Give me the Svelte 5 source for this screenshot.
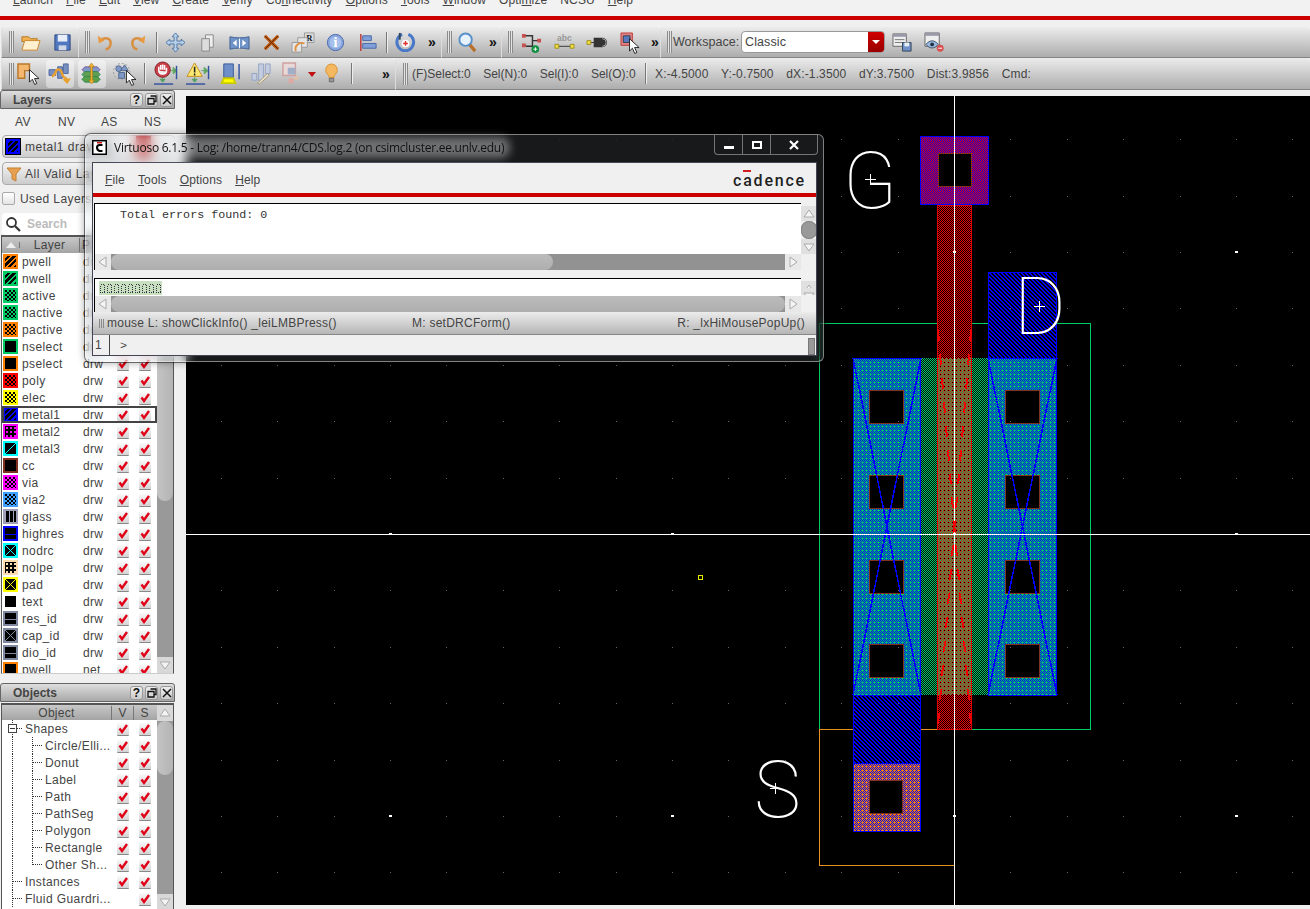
<script>
	const menus = [
		['L', 'aunch'], ['F', 'ile'], ['E', 'dit'], ['V', 'iew'], ['C', 'reate'], ['V', 'erify'],
		['Co', 'n', 'nectivity'], ['O', 'ptions'], ['T', 'ools'], ['W', 'indow'], ['Opti', 'm', 'ize'], ['', '', 'NCSU'], ['H', 'elp']
	];

	const layers = [
		{ n: 'pwell', p: 'drw', c: '#ff8000', t: 'hatch' },
		{ n: 'nwell', p: 'drw', c: '#00cc66', t: 'hatch' },
		{ n: 'active', p: 'drw', c: '#00cc66', t: 'check' },
		{ n: 'nactive', p: 'drw', c: '#00cc66', t: 'check' },
		{ n: 'pactive', p: 'drw', c: '#ff8000', t: 'check' },
		{ n: 'nselect', p: 'drw', c: '#00cc66', t: 'none' },
		{ n: 'pselect', p: 'drw', c: '#ff8000', t: 'none' },
		{ n: 'poly', p: 'drw', c: '#ff0000', t: 'check' },
		{ n: 'elec', p: 'drw', c: '#ffff00', t: 'check' },
		{ n: 'metal1', p: 'drw', c: '#0000ff', t: 'hatch', sel: true },
		{ n: 'metal2', p: 'drw', c: '#ff00ff', t: 'dots' },
		{ n: 'metal3', p: 'drw', c: '#00ffff', t: 'slash' },
		{ n: 'cc', p: 'drw', c: '#803020', t: 'none' },
		{ n: 'via', p: 'drw', c: '#ff00ff', t: 'check' },
		{ n: 'via2', p: 'drw', c: '#40a0ff', t: 'check' },
		{ n: 'glass', p: 'drw', c: '#a0a0b8', t: 'bars' },
		{ n: 'highres', p: 'drw', c: '#0000ff', t: 'wave' },
		{ n: 'nodrc', p: 'drw', c: '#00ffff', t: 'cross' },
		{ n: 'nolpe', p: 'drw', c: '#ffdcb0', t: 'dots' },
		{ n: 'pad', p: 'drw', c: '#ffff00', t: 'cross' },
		{ n: 'text', p: 'drw', c: '#ffffff', t: 'none' },
		{ n: 'res_id', p: 'drw', c: '#8088a0', t: 'wave' },
		{ n: 'cap_id', p: 'drw', c: '#8088a0', t: 'cross' },
		{ n: 'dio_id', p: 'drw', c: '#8088a0', t: 'wave' },
		{ n: 'pwell', p: 'net', c: '#ff8000', t: 'none' }
	];

	const objects = [
		{ n: 'Shapes', d: 0, open: true, v: true },
		{ n: 'Circle/Elli...', d: 1, v: true },
		{ n: 'Donut', d: 1, v: true },
		{ n: 'Label', d: 1, v: true },
		{ n: 'Path', d: 1, v: true },
		{ n: 'PathSeg', d: 1, v: true },
		{ n: 'Polygon', d: 1, v: true },
		{ n: 'Rectangle', d: 1, v: true },
		{ n: 'Other Sh...', d: 1, v: true, last: true },
		{ n: 'Instances', d: 0, v: true },
		{ n: 'Fluid Guardri...', d: 0, v: false }
	];

	const status = ['Sel(N):0', 'Sel(I):0', 'Sel(O):0'];
	const coords = ['X:-4.5000', 'Y:-0.7500', 'dX:-1.3500', 'dY:3.7500', 'Dist:3.9856', 'Cmd:'];

	// canvas grid dots, major ones every fifth step
	const dots = [];
	for (let k = -14; k <= 6; k++) {
		for (let j = -7; j <= 7; j++) {
			dots.push({
				x: Math.round(954 + k * 56.4),
				y: Math.round(534 + j * 56.4),
				major: k % 5 === 0 && j % 5 === 0
			});
		}
	}

	const holes = [
		[869, 390], [869, 475], [869, 560], [869, 644],
		[1005, 390], [1005, 475], [1005, 560], [1005, 644]
	];
</script>

{#snippet check()}
	<span class="cb">
		<svg viewBox="0 0 12 12" width="12" height="12"><path d="M2.5 5.5 5 9 10 2" fill="none" stroke="#e00018" stroke-width="2.4" /></svg>
	</span>
{/snippet}

{#snippet arrow(dir)}
	<span class="sb-btn">
		<svg viewBox="0 0 16 16" width="16" height="16">
			{#if dir === 'up'}<path d="M8 4 13 11H3z" fill="#f4f4f4" stroke="#aaa" />
			{:else if dir === 'down'}<path d="M8 12 13 5H3z" fill="#f4f4f4" stroke="#aaa" />
			{:else if dir === 'left'}<path d="M4 8 11 3V13z" fill="#f4f4f4" stroke="#aaa" />
			{:else}<path d="M12 8 5 3V13z" fill="#f4f4f4" stroke="#aaa" />{/if}
		</svg>
	</span>
{/snippet}

{#snippet cursor(x, y)}
	<path transform="translate({x} {y})" d="M0 0v13l3-3 2.5 5.5 2.2-1-2.4-5.2H10z" fill="#fff" stroke="#222" stroke-width="1" />
{/snippet}

{#snippet dockTitle(name)}
	<div class="dock-title">
		<span>{name}</span>
		<div class="dock-btns">
			<b>?</b>
			<b><svg viewBox="0 0 10 10" width="10" height="10"><path d="M3.5 1h5.500v5.500H7M1 3.500h6V9H1z" fill="none" stroke="#111" stroke-width="1.300" /></svg></b>
			<b><svg viewBox="0 0 10 10" width="10" height="10"><path d="M1 1l8 8M9 1l-8 8" stroke="#111" stroke-width="1.500" /></svg></b>
		</div>
	</div>
{/snippet}

<div class="app">
	<div class="menubar">
		<div class="menus">
			{#each menus as m}
				<span>{#if m.length === 2}<u>{m[0]}</u>{m[1]}{:else}{m[0]}<u>{m[1]}</u>{m[2]}{/if}</span>
			{/each}
		</div>
	</div>
	<div class="redline"></div>

	<div class="toolbar row1">
		<div class="sec s1">
			<i class="grip"></i>
			<span class="slot"><svg viewBox="0 0 22 22"><path d="M2 5h7l2 2h7v3H2z" fill="#f0b050" stroke="#b87820" /><path d="M2 19 5 9h16l-3 10z" fill="#fff0d0" stroke="#c88830" /></svg></span>
			<span class="slot"><svg viewBox="0 0 22 22"><path d="M3 3h16v16H3z" fill="#5078c0" stroke="#304880" /><path d="M6 3h10v7H6z" fill="#e8eef8" /><path d="M7 14h8v5H7z" fill="#d0d8e8" /></svg></span>
		</div>
		<div class="sec s2">
			<i class="grip"></i>
			<span class="slot"><svg viewBox="0 0 22 22"><path d="M5 9c6-5 13-2 11 5-1 3-3 4-5 4" fill="none" stroke="#d89040" stroke-width="2.600" /><path d="M3 4l1 8 6-3z" fill="#e89a40" /></svg></span>
			<span class="slot"><svg viewBox="0 0 22 22"><path d="M17 9c-6-5-13-2-11 5 1 3 3 4 5 4" fill="none" stroke="#d89040" stroke-width="2.600" /><path d="M19 4l-1 8-6-3z" fill="#e89a40" /></svg></span>
			<i class="sep"></i>
			<span class="slot"><svg viewBox="0 0 22 22"><path d="M11 1l3.500 4H12.500v4.500H17V7.500l4 3.500-4 3.500v-2h-4.500V17H14.500L11 21 7.500 17h2v-4.500H5v2L1 11l4-3.500v2h4.500V5h-2z" fill="#b8cfe8" stroke="#5078a8" /></svg></span>
			<span class="slot"><svg viewBox="0 0 22 22"><path d="M9 3h8v13H9z" fill="#eee" stroke="#888" /><path d="M5 7h8v13H5z" fill="#ddd" stroke="#888" /></svg></span>
			<span class="slot"><svg viewBox="0 0 22 22"><path d="M1 5c6 1.500 14 1.500 20 0v13c-6-1.500-14-1.500-20 0z" fill="#6f93c8" stroke="#3f6090" /><path d="M8 8 4 11.500 8 15zM14 8l4 3.500-4 3.500z" fill="#fff" /><path d="M11 7v10" stroke="#fff" /></svg></span>
			<span class="slot"><svg viewBox="0 0 22 22"><path d="M4 4l14 14M18 4 4 18" stroke="#c05a10" stroke-width="3.400" /><path d="M4 4l14 14M18 4 4 18" stroke="#5a2808" stroke-width="1" /></svg></span>
			<span class="slot wide"><svg viewBox="0 0 26 24"><path d="M14 2h10v10H14z" fill="#ddd" stroke="#999" /><text x="16" y="10" class="tiny-r">R</text><path d="M7 7h10v10H7z" fill="#e4e4e4" stroke="#999" /><path d="M1 12h10v10H1z" fill="#e4e4e4" stroke="#999" /><path d="M5 21c-2-6 4-10 9-8" fill="none" stroke="#e09040" stroke-width="2" /></svg></span>
			<span class="slot"><svg viewBox="0 0 22 22"><circle cx="11" cy="11" r="8.500" fill="#8aa8e0" stroke="#4a68a8" /><circle cx="11" cy="11" r="6" fill="#a8c0ec" /><text x="11" y="16" class="info">i</text></svg></span>
			<span class="slot"><svg viewBox="0 0 22 22"><path d="M4 2v18" stroke="#c04040" stroke-width="1.600" /><path d="M6 4h9v5H6zM6 12h14v5H6z" fill="#7fa0d8" stroke="#4a68a8" /></svg></span>
			<i class="sep"></i>
			<span class="slot"><svg viewBox="0 0 22 22"><path d="M14 2.500a8.800 8.800 0 1 1-6.500 0" fill="none" stroke="#4a78c8" stroke-width="3" /><path d="M5 1v7" stroke="#345" stroke-width="2" /><circle cx="11" cy="12" r="4" fill="#fff" /><path d="M11 9.500v5M8.500 12h5" stroke="#e03030" stroke-width="1.500" /></svg></span>
			<span class="more">»</span>
		</div>
		<div class="sec s3">
			<i class="grip"></i>
			<span class="slot"><svg viewBox="0 0 22 22"><path d="M13 13l6 7" stroke="#b87028" stroke-width="3.400" /><circle cx="9" cy="8" r="6.500" fill="#e8f2fc" stroke="#5890c8" stroke-width="2" /></svg></span>
			<span class="more">»</span>
		</div>
		<div class="sec s4">
			<i class="grip"></i>
			<span class="slot"><svg viewBox="0 0 22 22"><path d="M5 4h7v11H5M12 9h7M2 4h3M2 14h3" fill="none" stroke="#333" stroke-width="1.500" /><path d="M1 2h4v4H1zM1 12h4v4H1zM17 7h4v4h-4z" fill="#c85050" /><circle cx="15" cy="18" r="4" fill="#109040" /><path d="M15 16v4M13 18h4" stroke="#fff" /></svg></span>
			<span class="slot"><svg viewBox="0 0 22 22"><text x="11" y="9" class="abc">abc</text><path d="M3 15h16" stroke="#333" /><path d="M1 13h4v4H1zM17 13h4v4h-4z" fill="#f0e040" stroke="#a09020" /></svg></span>
			<span class="slot"><svg viewBox="0 0 22 22"><path d="M2 11h6" stroke="#333" /><path d="M0 9h4v4H0z" fill="#f0e040" stroke="#a09020" /><path d="M7 6h9a5 5 0 0 1 0 10H7z" fill="#333" /><path d="M16 7a4 4 0 0 1 0 8" fill="none" stroke="#aaa" /></svg></span>
			<span class="slot"><svg viewBox="0 0 22 22"><path d="M1 1h12v13H1z" fill="#e08080" stroke="#c04040" /><path d="M3.500 4h7v7h-7z" fill="#5878c0" stroke="#345" />{@render cursor(10, 7)}</svg></span>
			<span class="more">»</span>
		</div>
		<div class="sec s5">
			<i class="grip"></i>
			<span class="ws-label">Workspace:</span>
			<div class="ws-combo">
				<span>Classic</span>
				<em><svg viewBox="0 0 10 6" width="10" height="6"><path d="M1 1h8L5 5z" fill="#fff" /></svg></em>
			</div>
			<span class="slot"><svg viewBox="0 0 22 22"><path d="M1 2h14v13H1z" fill="#eee" stroke="#666" /><path d="M1 2h14v3H1z" fill="#99a" /><path d="M3 8h10M3 11h8" stroke="#777" /><path d="M11 11h9v9h-9z" fill="#6f90c8" stroke="#345" /><path d="M13 11h5v4h-5z" fill="#e8eef8" /></svg></span>
			<span class="slot"><svg viewBox="0 0 22 22"><path d="M1 1h15v14H1z" fill="#eee" stroke="#666" /><path d="M1 1h15v3H1z" fill="#99a" /><path d="M2 13c4-5 9-5 13 0-4 5-9 5-13 0z" fill="#9ab8e0" stroke="#456" /><circle cx="8.500" cy="13" r="2" fill="#234" /><circle cx="17" cy="17" r="3.600" fill="#d85050" /><path d="M15 17h4" stroke="#fff" /></svg></span>
		</div>
	</div>

	<div class="toolbar row2">
		<div class="sec r1">
			<i class="grip"></i>
			<span class="slot big"><svg viewBox="0 0 24 24"><path d="M1 2h12v7H8v8H1z" fill="#f4b870" stroke="#b87828" stroke-width="1.500" />{@render cursor(13, 8)}</svg></span>
			<span class="slot big on"><svg viewBox="0 0 24 24"><path d="M0 8h7v6H0zM9 5h5v12H9zM15 2h5v10h-5z" fill="#7890c0" stroke="#5068a0" /><path d="M3 15c5-1 3-9 8-7 4 2 2 7 5 8 2 .5 3 3 3 5" fill="none" stroke="#e8a030" stroke-width="2.500" /><path d="M14 18l5 5 4-6z" fill="#e8a030" /></svg></span>
			<span class="slot big on"><svg viewBox="0 0 24 24"><path d="M4 5h13l3 3-3 3H4l-3-3z" fill="#8098c8" stroke="#506" stroke-width=".5" /><path d="M4 10h13l3 3-3 3H4l-3-3z" fill="#60a050" stroke="#385" /><path d="M4 15h13l3 3-3 3H4l-3-3z" fill="#58a048" stroke="#385" /><path d="M11 1l-3 4h2v14H8l3 4 3-4h-2V5h2z" fill="#f0b030" stroke="#a07010" stroke-width=".5" /></svg></span>
			<span class="slot big"><svg viewBox="0 0 24 24"><circle cx="9" cy="10" r="8.500" fill="none" stroke="#999" stroke-dasharray="2 2" /><circle cx="6" cy="7" r="3" fill="#8098c8" stroke="#506890" /><path d="M6 11h6v6H6z" fill="#8098c8" stroke="#506890" /><path d="M12 3l4 6H8z" fill="#8098c8" stroke="#506890" />{@render cursor(14, 9)}</svg></span>
			<i class="sep"></i>
			<span class="slot big"><svg viewBox="0 0 24 24"><path d="M0 23h20" stroke="#3050a0" stroke-width="1.500" /><path d="M9 16v4M6.500 18 9 21l2.500-3z" fill="#50a060" stroke="#50a060" /><path d="M17 9h4M20 5.500 24 9l-4 3.500z" fill="#60a860" stroke="#60a860" /><path d="M23.500 4v14" stroke="#3050a0" stroke-width="1.500" /><circle cx="9" cy="8" r="8" fill="#c84048" stroke="#802028" /><path d="M5 9V5M7 8V3M9 8V2.500M11 8V3M13 10V6M5 9c0 4 7 5 8 1" fill="#eee" stroke="#fff" stroke-width="1.600" /></svg></span>
			<span class="slot big"><svg viewBox="0 0 24 24"><path d="M0 23h20" stroke="#3050a0" stroke-width="1.500" /><path d="M9 16v4M6.500 18 9 21l2.500-3z" fill="#50a060" stroke="#50a060" /><path d="M16 9h4M19 5.500 23 9l-4 3.500z" fill="#60a860" stroke="#60a860" /><path d="M23.500 4v14" stroke="#3050a0" stroke-width="1.500" /><path d="M9 1 17 15H1z" fill="#fce870" stroke="#c89020" /><path d="M9 5v6M9 12v2" stroke="#222" stroke-width="1.600" /></svg></span>
			<span class="slot big"><svg viewBox="0 0 24 24"><path d="M6 2h10v14H6z" fill="#6f8fc8" stroke="#3a5a98" /><path d="M4 22l2-5h10l2 5z" fill="#ff0" stroke="#cc0" stroke-width="2" /><path d="M22 2v16" stroke="#3050a0" stroke-width="1.500" /></svg></span>
			<span class="slot big"><svg viewBox="0 0 24 24"><path d="M2 12h5v7H2zM9 2h5v17H9zM16 2h5v10h-5z" fill="#c4cde0" stroke="#93a4c4" /><path d="M8 22l10-10 2 2-10 9z" fill="#e8e0c8" stroke="#a09880" /></svg></span>
			<span class="slot big tri-slot">
				<svg viewBox="0 0 24 24"><path d="M1 1h13v13H1z" fill="#e8d8d8" stroke="#d0a0a0" stroke-width="1.500" /><path d="M6 6h8v7H6z" fill="#a0aec8" /><path d="M15 14l3 4h-6z" fill="#e8c0a0" /><path d="M7 17h5v5H7z" fill="#e0a8a0" /></svg>
			</span>
			<span class="tri"></span>
			<span class="slot bulb"><svg viewBox="0 0 24 24"><path d="M12 1a7 7 0 0 0-4 12.500c1 1 1 2 1 3h6c0-1 0-2 1-3A7 7 0 0 0 12 1z" fill="#f4b860" stroke="#d89030" /><path d="M9.500 17.500h5v4h-5z" fill="#999" stroke="#666" /></svg></span>
			<i class="sep last"></i>
			<span class="more">»</span>
		</div>
		<div class="sec r2">
			<i class="grip"></i>
			<span class="st first">(F)Select:0</span>
			{#each status as s}<span class="st">{s}</span>{/each}
			<i class="sep"></i>
			{#each coords as s}<span class="st co">{s}</span>{/each}
		</div>
	</div>

	<div class="main">
		<aside class="side">
			{@render dockTitle('Layers')}
			<div class="tabs">
				<span>AV</span><span>NV</span><span>AS</span><span>NS</span>
			</div>
			<div class="pick">
				<span class="sw hatch cur"></span>
				<span>metal1 drawing</span>
				<em></em>
			</div>
			<div class="pick second">
				<svg viewBox="0 0 16 16" width="16" height="16"><path d="M1 2h14l-5 6v7l-4-2V8z" fill="#e8a050" stroke="#c08030" /></svg>
				<span>All Valid Layers</span>
			</div>
			<label class="used"><i></i>Used Layers</label>
			<div class="search">
				<svg viewBox="0 0 16 16" width="16" height="16"><circle cx="6.500" cy="6.500" r="4.500" fill="#fff" stroke="#333" stroke-width="1.800" /><path d="M10 10l5 5" stroke="#333" stroke-width="2.200" /></svg>
				<span>Search</span>
			</div>

			<div class="table layers">
				<div class="rows">
					<div class="head">
						<span class="h-sort"><svg viewBox="0 0 10 6" width="10" height="6"><path d="M5 0l5 6H0z" fill="#eee" /></svg></span>
						<span class="h-layer">Layer</span>
						<span class="h-p">P</span>
					</div>
					{#each layers as l}
						<div class="row" class:sel={l.sel}>
							<span class="sw {l.t}" style="--c:{l.c}"></span>
							<span class="name">{l.n}</span>
							<span class="purpose">{l.p}</span>
							{@render check()}
							{@render check()}
						</div>
					{/each}
				</div>
				<div class="vscroll">
					{@render arrow('up')}
					<div class="thumb layers-thumb"></div>
					<div class="spacer"></div>
					{@render arrow('down')}
				</div>
			</div>

			{@render dockTitle('Objects')}
			<div class="table objects">
				<div class="rows">
					<div class="head obj">
						<span class="h-obj">Object</span>
						<span class="h-vs">V</span>
						<span class="h-vs">S</span>
					</div>
					{#each objects as o}
						<div class="row tree" class:child={o.d === 1} class:lastchild={o.last}>
							{#if o.open}<span class="minus"></span>{/if}
							<span class="oname">{o.n}</span>
							{#if o.v}{@render check()}{:else}<span class="cb none"></span>{/if}
							{@render check()}
						</div>
					{/each}
				</div>
				<div class="vscroll">
					{@render arrow('up')}
					<div class="thumb objects-thumb"></div>
					<div class="spacer"></div>
					{@render arrow('down')}
				</div>
			</div>
		</aside>

		<div class="canvas">
			<svg viewBox="186 96 1124 809" width="1124" height="809" shape-rendering="crispEdges">
				<defs>
					<pattern id="m1" width="4" height="4" patternUnits="userSpaceOnUse">
						<rect width="4" height="4" fill="#000" />
						<path d="M0 0h2v1H0zM1 1h2v1H1zM2 2h2v1H2zM3 3h1v1H3zM0 3h1v1H0z" fill="#0000ff" />
					</pattern>
					<!-- one pixel stipples, phase follows page coordinates -->
					<pattern id="active" width="2" height="2" patternUnits="userSpaceOnUse">
						<rect width="2" height="2" fill="#00cc66" />
						<path d="M1 0h1v1H1zM0 1h1v1H0z" fill="#000" />
					</pattern>
					<pattern id="poly" width="2" height="2" patternUnits="userSpaceOnUse">
						<rect width="2" height="2" fill="#000" />
						<path d="M1 0h1v1H1zM0 1h1v1H0z" fill="#f00000" />
					</pattern>
					<pattern id="polyactive" width="4" height="4" patternUnits="userSpaceOnUse">
						<rect width="4" height="4" fill="#00cc66" />
						<path d="M1 0h1v1H1zM3 0h1v1H3zM0 1h1v1H0zM2 1h1v1H2zM1 2h1v1H1zM3 2h1v1H3zM0 3h1v1H0zM2 3h1v1H2z" fill="#f00000" />
						<path d="M0 2h1v1H0z" fill="#000" />
					</pattern>
					<pattern id="teal" width="4" height="4" patternUnits="userSpaceOnUse">
						<rect width="4" height="4" fill="#0000ff" />
						<path d="M1 0h1v1H1zM3 0h1v1H3zM0 1h1v1H0zM2 1h1v1H2zM1 2h1v1H1zM3 2h1v1H3zM0 3h1v1H0zM2 3h1v1H2zM2 2h1v1H2z" fill="#00cc66" />
					</pattern>
					<pattern id="gate" width="2" height="2" patternUnits="userSpaceOnUse">
						<rect width="2" height="2" fill="#0000e0" />
						<path d="M1 0h1v1H1zM0 1h1v1H0z" fill="#f00000" />
					</pattern>
					<pattern id="psrc" width="4" height="4" patternUnits="userSpaceOnUse">
						<rect width="4" height="4" fill="#0000ff" />
						<path d="M1 0h1v1H1zM3 0h1v1H3zM0 1h1v1H0zM2 1h1v1H2zM1 2h1v1H1zM3 2h1v1H3zM0 3h1v1H0zM2 3h1v1H2zM2 2h1v1H2z" fill="#ff8000" />
					</pattern>
				</defs>

				<rect x="819.5" y="323.5" width="271" height="406" fill="none" stroke="#00cc66" />
				<rect x="819.5" y="729.5" width="135" height="136" fill="none" stroke="#e89020" />

				<rect x="921" y="358" width="67" height="337" fill="url(#active)" />
				<rect x="937.5" y="205.5" width="34" height="524" fill="url(#poly)" stroke="#e00000" />
				<rect x="938" y="358" width="33" height="337" fill="url(#polyactive)" />

				<rect x="920.5" y="136.500" width="68" height="68" fill="url(#gate)" stroke="#0000ff" />
				<rect x="988.5" y="272.5" width="68" height="86" fill="url(#m1)" stroke="#0000ff" />
				<rect x="988.5" y="358.5" width="68" height="337" fill="url(#teal)" stroke="#0000ff" />
				<rect x="853.5" y="358.5" width="67" height="337" fill="url(#teal)" stroke="#0000ff" />
				<rect x="853.5" y="695.5" width="67" height="68" fill="url(#m1)" stroke="#0000ff" />
				<rect x="853.5" y="763.5" width="67" height="68" fill="url(#psrc)" stroke="#0000ff" />

				<rect x="938.5" y="153.500" width="33" height="33" fill="#000" stroke="#803020" />
				<rect x="869.5" y="780.5" width="33" height="33" fill="#000" stroke="#803020" />
				{#each holes as h}
					<rect x={h[0] + 0.5} y={h[1] + 0.5} width="34" height="33" fill="#000" stroke="#803020" />
				{/each}

				<g stroke="#0000ff" stroke-width="1.500" fill="none">
					<path d="M853 358 921 695M921 358 853 695M988 358l69 337M1057 358l-69 337" />
				</g>

				{#each dots as d}
					{#if d.major}
						<rect x={d.x - 1} y={d.y - 1} width="3" height="2" fill="#fff" />
					{:else}
						<rect x={d.x} y={d.y} width="1" height="1" fill="#666" />
					{/if}
				{/each}

				<path d="M954.500 96v809M186 534.500h1124" stroke="#fff" stroke-width="1" />

				<g stroke="#f00000" stroke-width="2" fill="none" stroke-dasharray="11 13">
					<path d="M938 330 971 725M971 330 938 725" />
				</g>

				<rect x="698.500" y="575.500" width="4" height="4" fill="none" stroke="#e8e800" />

				<g class="marks" stroke="#fff">
					<path d="M865 179.500h11M870.500 174v11M1034 306.500h11M1039.500 301v11M770 788.500h11M775.500 783v11" />
				</g>
				<text x="843" y="208" class="lbl" shape-rendering="auto">G</text>
				<text x="1014" y="334" class="lbl" shape-rendering="auto">D</text>
				<text x="754" y="817" class="lbl" shape-rendering="auto">S</text>
			</svg>
		</div>
	</div>

	<div class="win">
		<div class="win-title">
			<svg viewBox="0 0 15 15" width="15" height="15"><path d="M0 0h15v15H0z" fill="#000" /><path d="M1.500 1.500h12v12h-12z" fill="#fff" /><path d="M5 2h5v1.500H5z" fill="#d01818" /><path d="M10.500 5h-3Q5 5 5 7.500T7.500 11h3" fill="none" stroke="#000" stroke-width="2" /></svg>
			<span>Virtuoso 6.1.5 - Log: /home/trann4/CDS.log.2 (on csimcluster.ee.unlv.edu)</span>
			<div class="win-btns">
				<b class="min"><i></i></b>
				<b class="max"><i></i></b>
				<b class="close"><svg viewBox="0 0 10 10" width="10" height="10"><path d="M1 1l8 8M9 1 1 9" stroke="#fff" stroke-width="2.200" /></svg></b>
			</div>
		</div>
		<div class="client">
			<div class="win-menu">
				<span><u>F</u>ile</span><span><u>T</u>ools</span><span><u>O</u>ptions</span><span><u>H</u>elp</span>
				<div class="logo"><span class="a">a</span></div>
			</div>
			<div class="win-red"></div>
			<div class="log">
				<div class="log-main">
					<div class="log-text">Total errors found: 0</div>
					<div class="hscroll">
						{@render arrow('left')}
						<div class="hthumb top"></div>
						<div class="spacer"></div>
						{@render arrow('right')}
					</div>
				</div>
				<div class="log-v">
					{@render arrow('up')}
					<div class="vthumb"></div>
					{@render arrow('down')}
				</div>
			</div>
			<div class="cmdlog">
				<div class="log-main">
					<div class="cmd-text">
						<svg class="tofu" viewBox="0 0 63 14" width="63" height="14" shape-rendering="crispEdges">
							<rect width="63" height="14" fill="#c8e0c0" />
							{#each [0, 1, 2, 3, 4, 5, 6, 7, 8] as i}
								<rect x={i * 7 + 1.5} y="3.500" width="4" height="8" fill="none" stroke="#334" stroke-dasharray="1 1" />
							{/each}
						</svg>
					</div>
					<div class="hscroll low">
						{@render arrow('left')}
						<div class="hthumb full"></div>
						{@render arrow('right')}
					</div>
				</div>
				<div class="log-v mini">
					{@render arrow('up')}
					{@render arrow('down')}
				</div>
			</div>
			<div class="mousebar">
				<i class="minigrip"></i>
				<span class="m1">mouse L: showClickInfo() _leiLMBPress()</span>
				<span class="m2">M: setDRCForm()</span>
				<span class="m3">R: _lxHiMousePopUp()</span>
			</div>
			<div class="prompt">
				<span class="num">1</span>
				<span class="gt">&gt;</span>
				<i class="stub"></i>
			</div>
		</div>
	</div>
</div>

<style>
	:global(body) {
		margin: 0;
		background: #f0f0f0;
		overflow: hidden;
	}

	.app {
		position: relative;
		width: 1310px;
		height: 909px;
		overflow: hidden;
		font-family: 'Liberation Sans', Arial, sans-serif;
		font-size: 12px;
		color: #444;
		background: #f0f0f0;
	}

	.menubar {
		height: 16px;
		overflow: hidden;
		background: #f2f2f2;
	}

	.menus {
		display: flex;
		gap: 13px;
		margin-top: -7px;
		padding-left: 13px;
		line-height: 14px;
		letter-spacing: 0.12px;
		white-space: nowrap;
	}

	.redline {
		height: 4px;
		background: #cc0000;
		margin-bottom: 7px;
	}

	.toolbar {
		display: flex;
		overflow: hidden;
	}

	.row1 {
		height: 31px;
	}

	.row2 {
		height: 32px;
	}

	.sec {
		display: flex;
		align-items: center;
		box-sizing: border-box;
		height: 100%;
		flex: none;
		background: linear-gradient(#ececec, #adadad);
		border-bottom: 1px solid #858585;
		border-radius: 4px 4px 0 0;
		border-left: 1px solid #ddd;
	}

	.s1 { width: 77px; padding-left: 7px; margin-left: 1px; gap: 2px; }
	.s1 .grip { margin-right: -1px; }
	.s2 { width: 363px; padding-left: 6px; }
	.s3 { width: 60px; padding-left: 5px; }
	.s4 { width: 159px; padding-left: 6px; gap: 3px; }
	.s5 { flex: 1; padding-left: 6px; }
	.s2 .slot { margin-right: 2px; }
	.s2 .sep { margin: 0 3px 0 2px; }

	.r1 { width: 394px; padding-left: 7px; margin-left: 1px; }
	.r2 { flex: 1; padding-left: 7px; }

	.grip {
		flex: none;
		width: 5px;
		height: 22px;
		background: repeating-linear-gradient(90deg, #8a8a8a 0 1px, #e4e4e4 1px 2px);
	}

	.sep {
		flex: none;
		width: 1px;
		height: 21px;
		background: #777;
		box-shadow: 1px 0 #eee;
	}

	.slot {
		flex: none;
		display: flex;
		align-items: center;
		justify-content: center;
		width: 30px;
		height: 24px;
	}

	.slot svg {
		width: 21px;
		height: 21px;
		overflow: visible;
	}

	.slot.wide svg {
		width: 25px;
		height: 23px;
	}

	.slot.big {
		width: 28px;
		height: 28px;
		margin-right: 4px;
		border-radius: 4px;
	}

	.slot.big svg {
		width: 23px;
		height: 23px;
	}

	.slot.on {
		background: rgba(255, 255, 255, 0.42);
	}

	.tiny-r {
		font: bold 9px 'Liberation Serif', serif;
		fill: #111;
	}

	.info {
		font: bold 15px 'Liberation Serif', serif;
		fill: #fff;
		text-anchor: middle;
	}

	.abc {
		font: bold 9px 'Liberation Sans', sans-serif;
		fill: #999;
		text-anchor: middle;
	}

	.more {
		flex: none;
		width: 14px;
		margin-left: 4px;
		text-align: center;
		font: bold 14px 'Liberation Sans', sans-serif;
		color: #111;
	}

	.s2 .more { margin-left: 3px; }
	.s4 .more { margin-left: 0; }

	.ws-label {
		margin-left: 1px;
		width: 68px;
		font-size: 12.5px;
		letter-spacing: 0.05px;
	}

	.ws-combo {
		display: flex;
		box-sizing: border-box;
		width: 144px;
		height: 22px;
		margin-right: 1px;
		border: 1px solid #999;
		border-radius: 4px;
		background: #fff;
		overflow: hidden;
	}

	.ws-combo span {
		flex: 1;
		padding-left: 3px;
		line-height: 20px;
		font-size: 12.5px;
		letter-spacing: 0.1px;
	}

	.ws-combo em {
		display: flex;
		align-items: center;
		justify-content: center;
		width: 16px;
		background: linear-gradient(#d00000, #980000);
	}

	.s5 .slot {
		width: 32px;
	}

	.tri-slot {
		margin-right: 0 !important;
	}

	.tri {
		flex: none;
		width: 0;
		height: 0;
		margin: 2px 4px 0 1px;
		border: 4px solid transparent;
		border-top: 5px solid #c01010;
		border-bottom: 0;
	}

	.bulb {
		width: 22px;
	}

	.sep.last {
		margin: 0 27px 0 9px;
	}

	.r1 .sep:not(.last) {
		margin: 0 6px 0 2px;
	}

	.r1 .more {
		margin-left: 0;
	}

	.st {
		margin-left: 12.5px;
		white-space: nowrap;
	}

	.st.co {
		letter-spacing: 0.15px;
	}

	.st.first {
		margin-left: 4px;
	}

	.r2 .sep {
		margin: 0 -3px 0 9px;
	}

	.main {
		display: flex;
		margin-top: 6px;
		height: 813px;
	}

	.side {
		flex: none;
		width: 175px;
		margin-right: 11px;
		margin-top: -6px;
		height: 819px;
	}

	.canvas {
		flex: none;
		width: 1124px;
		height: 809px;
		background: #000;
		overflow: hidden;
	}

	.canvas svg {
		display: block;
	}

	.lbl {
		font: 100 79px Roboto, sans-serif;
		fill: #fff;
	}

	.dock-title {
		display: flex;
		align-items: center;
		justify-content: space-between;
		box-sizing: border-box;
		height: 19px;
		padding: 0 1px 0 12px;
		background: linear-gradient(#dedede, #a8a8a8);
		border: 1px solid #666;
		border-radius: 3px 3px 0 0;
		font-size: 12px;
		font-weight: bold;
		color: #444;
	}

	.dock-btns {
		display: flex;
		gap: 2px;
	}

	.dock-btns b {
		display: flex;
		align-items: center;
		justify-content: center;
		box-sizing: border-box;
		width: 13px;
		height: 14px;
		border: 1px solid #999;
		border-radius: 3px;
		background: linear-gradient(#eee, #ccc);
		font-size: 12px;
		color: #111;
	}

	.tabs {
		display: grid;
		grid-template-columns: repeat(4, 43px);
		height: 26px;
		padding-left: 15px;
		align-items: center;
		letter-spacing: 0.3px;
	}

	.pick {
		display: flex;
		align-items: center;
		gap: 5px;
		position: relative;
		box-sizing: border-box;
		height: 23px;
		margin: 0 0 4px 2px;
		padding-left: 3px;
		border: 1px solid #aaa;
		border-radius: 4px;
		background: linear-gradient(#f4f4f4, #ccc);
		letter-spacing: 0.5px;
		white-space: nowrap;
	}

	.pick em {
		position: absolute;
		right: 23px;
		top: 0;
		bottom: 0;
		width: 15px;
		background: #b00000;
	}

	.pick.second {
		margin-top: 0;
		gap: 3px;
	}

	.used {
		display: flex;
		align-items: center;
		gap: 5px;
		height: 19px;
		margin: 2px 0 5px 2px;
		letter-spacing: 0.4px;
		white-space: nowrap;
	}

	.used i {
		box-sizing: border-box;
		width: 13px;
		height: 13px;
		border: 1px solid #aaa;
		border-radius: 2px;
		background: linear-gradient(#fff, #e4e4e4);
	}

	.search {
		display: flex;
		align-items: center;
		gap: 6px;
		height: 22px;
		margin-left: 2px;
		padding-left: 3px;
		background: #fff;
		border-radius: 4px 0 0 4px;
		color: #bbb;
		font-weight: bold;
	}

	.table {
		display: flex;
		overflow: hidden;
		background: #fff;
		border: 1px solid #555;
		border-width: 2px 1px 0 1px;
	}

	.table.layers {
		height: 436px;
		margin: 0 1px 9px 1px;
		border-bottom: 1px solid #ccc;
	}

	.table.objects {
		height: 205px;
		margin: 1px 1px 0 1px;
	}

	.rows {
		flex: none;
		width: 155px;
		overflow: hidden;
	}

	.head {
		display: flex;
		align-items: center;
		height: 16px;
		background: linear-gradient(#c8c8c8, #a4a4a4);
		color: #444;
	}

	.head.obj {
		height: 15px;
	}

	.h-sort {
		display: flex;
		justify-content: center;
		width: 17px;
		border-right: 1px solid #777;
	}

	.h-layer {
		width: 59px;
		text-align: center;
		border-right: 1px solid #777;
		letter-spacing: 0.3px;
	}

	.h-p {
		padding-left: 2px;
	}

	.h-obj {
		width: 109px;
		text-align: center;
		border-right: 1px solid #777;
		letter-spacing: 0.3px;
	}

	.h-vs {
		width: 21px;
		text-align: center;
		border-right: 1px solid #777;
	}

	.h-vs:last-child {
		border-right: 0;
	}

	.row {
		display: flex;
		align-items: center;
		box-sizing: border-box;
		height: 17px;
		position: relative;
	}

	.row.sel {
		outline: 2px solid #444;
		outline-offset: -2px;
	}

	.sw {
		flex: none;
		box-sizing: border-box;
		width: 15px;
		height: 15px;
		margin-left: 1px;
		border: 2px solid var(--c);
		background-color: #000;
		background-clip: padding-box;
	}

	.sw.cur {
		--c: #0000ff;
		width: 14px;
		height: 15px;
		margin-left: 0;
		outline: 1px solid #000;
	}

	.sw.hatch {
		background-image: repeating-linear-gradient(135deg, var(--c) 0 1.500px, #000 1.500px 4px);
	}

	.sw.check {
		background-image: repeating-conic-gradient(var(--c) 0 25%, #000 0 50%);
		background-size: 4px 4px;
	}

	.sw.dots {
		background-image: radial-gradient(var(--c) 0.8px, #000 1px);
		background-size: 4px 4px;
	}

	.sw.slash {
		background-image: linear-gradient(135deg, #000 47%, var(--c) 47% 53%, #000 53%);
	}

	.sw.bars {
		background-image: repeating-linear-gradient(90deg, var(--c) 0 1px, #000 1px 4px);
	}

	.sw.cross {
		background-image: linear-gradient(45deg, #000 46%, var(--c) 46% 54%, #000 54%), linear-gradient(135deg, #000 46%, var(--c) 46% 54%, #000 54%);
		background-blend-mode: lighten;
	}

	.sw.wave {
		background-image: linear-gradient(transparent 55%, var(--c) 55% 65%, transparent 65%);
	}

	.name {
		width: 61px;
		margin-left: 4px;
		letter-spacing: 0.4px;
	}

	.purpose {
		width: 34px;
		letter-spacing: 0.3px;
	}

	.cb {
		flex: none;
		display: block;
		box-sizing: border-box;
		width: 12px;
		height: 12px;
		margin-right: 10px;
		background: linear-gradient(#fafafa, #d4d4d4);
		border-radius: 1px;
		box-shadow: 0 1px 0 #888;
	}

	.cb svg {
		display: block;
	}

	.cb.none {
		background: none;
		box-shadow: none;
	}

	.row .cb:last-child {
		margin-right: 0;
	}

	.vscroll {
		flex: none;
		display: flex;
		flex-direction: column;
		width: 16px;
		background: #999;
	}

	.sb-btn {
		flex: none;
		display: block;
		width: 16px;
		height: 16px;
		background: #d8d8d8;
		border-bottom: 0;
	}

	.sb-btn svg {
		display: block;
	}

	.thumb {
		flex: none;
		background: linear-gradient(90deg, #c4c4c4, #b4b4b4);
		border-radius: 8px;
	}

	.layers-thumb {
		height: 248px;
	}

	.objects-thumb {
		height: 54px;
	}

	.spacer {
		flex: 1;
	}

	.tree {
		padding: 0 6px 0 23px;
	}

	.tree::before {
		content: '';
		position: absolute;
		left: 10px;
		top: 0;
		bottom: 0;
		border-left: 1px dotted #333;
	}

	.tree::after {
		content: '';
		position: absolute;
		left: 11px;
		top: 8px;
		width: 9px;
		border-top: 1px dotted #333;
	}

	.tree.child {
		padding-left: 43px;
	}

	.tree.child::after {
		left: 31px;
		width: 9px;
	}

	.tree.child .oname::before {
		content: '';
		position: absolute;
		left: 30px;
		top: 0;
		bottom: 0;
		border-left: 1px dotted #333;
	}

	.tree.lastchild .oname::before {
		bottom: 8px;
	}

	.minus {
		position: absolute;
		left: 6px;
		top: 4px;
		box-sizing: border-box;
		width: 9px;
		height: 9px;
		z-index: 1;
		background: linear-gradient(#333, #333) center/5px 1px no-repeat #fff;
		border: 1px solid #444;
	}

	.oname {
		flex: 1;
		min-width: 0;
		letter-spacing: 0.4px;
		white-space: nowrap;
	}

	/* floating log window, glass frame over whatever is behind it */
	.win {
		position: absolute;
		left: 85px;
		top: 134px;
		box-sizing: border-box;
		width: 739px;
		height: 228px;
		padding: 0 6px 5px 6px;
		display: flex;
		flex-direction: column;
		border: 1px solid rgba(255, 255, 255, 0.45);
		border-radius: 6px;
		background: rgba(190, 205, 225, 0.12);
		backdrop-filter: blur(6px);
		box-shadow: 0 0 0 1px rgba(0, 0, 0, 0.5), 0 0 8px rgba(0, 0, 0, 0.4);
	}

	.win-title {
		flex: none;
		display: flex;
		align-items: center;
		gap: 7px;
		box-sizing: border-box;
		height: 27px;
		padding-bottom: 2px;
		font: 12px 'Open Sans', 'Noto Sans', sans-serif;
		color: #111;
		white-space: nowrap;
		isolation: isolate;
	}

	.win-title span {
		position: relative;
		letter-spacing: -0.25px;
	}

	.win-title span::before {
		content: '';
		position: absolute;
		inset: -2px -6px;
		z-index: -1;
		background: rgba(255, 255, 255, 0.38);
		border-radius: 9px;
		filter: blur(4px);
	}

	.win-btns {
		position: absolute;
		right: 5px;
		top: 0;
		display: flex;
		height: 19px;
		border: 1px solid rgba(255, 255, 255, 0.4);
		border-top: 0;
		border-radius: 0 0 4px 4px;
	}

	.win-btns b {
		display: flex;
		align-items: center;
		justify-content: center;
		width: 27px;
		border-right: 1px solid rgba(255, 255, 255, 0.4);
	}

	.win-btns .close {
		width: 46px;
		border-right: 0;
	}

	.min i {
		display: block;
		width: 10px;
		height: 3px;
		margin-top: 5px;
		background: #fff;
	}

	.max i {
		display: block;
		box-sizing: border-box;
		width: 10px;
		height: 8px;
		border: 2px solid #fff;
		border-top-width: 2px;
	}

	.client {
		flex: 1;
		display: flex;
		flex-direction: column;
		background: #f0f0f0;
		border: 1px solid #445;
		overflow: hidden;
	}

	.win-menu {
		flex: none;
		display: flex;
		align-items: center;
		gap: 13px;
		box-sizing: border-box;
		height: 30px;
		padding: 3px 10px 0 12px;
		letter-spacing: 0.15px;
	}

	.logo {
		margin-left: auto;
		padding-top: 1px;
		font: 500 16px Roboto, sans-serif;
		letter-spacing: 1.800px;
		color: #222;
	}

	.logo::before {
		content: 'c';
	}

	.logo::after {
		content: 'dence';
	}

	.logo .a {
		position: relative;
	}

	.logo .a::before {
		content: '';
		position: absolute;
		left: 0;
		top: -1px;
		width: 8px;
		height: 2px;
		background: #d02020;
	}

	.win-red {
		flex: none;
		height: 4px;
		margin-bottom: 6px;
		background: #cc0000;
	}

	.log,
	.cmdlog {
		flex: none;
		display: flex;
		margin-left: 1px;
	}

	.log-main {
		flex: none;
		width: 706px;
		display: flex;
		flex-direction: column;
		background: #fff;
		border: solid #000;
		border-width: 1px 0 0 1px;
	}

	.log {
		height: 67px;
		margin-bottom: 8px;
	}

	.cmdlog {
		height: 34px;
	}

	.log-text {
		flex: 1;
		padding: 4px 0 0 25px;
		font: 11.700px/14px 'Liberation Mono', monospace;
		color: #333;
	}

	.cmd-text {
		flex: 1;
		padding: 2px 0 0 4px;
	}

	.tofu {
		display: block;
	}

	.hscroll {
		flex: none;
		display: flex;
		height: 16px;
		background: #929292;
	}

	.hscroll .sb-btn {
		background: #e8e8e8;
	}

	.hthumb {
		flex: none;
		border-radius: 8px;
		background: linear-gradient(#bcbcbc, #aeaeae);
	}

	.hthumb.top {
		width: 442px;
	}

	.hthumb.full {
		flex: 1;
	}

	.log-v {
		flex: none;
		display: flex;
		flex-direction: column;
		width: 16px;
		margin-top: 3px;
		background: #f0f0f0;
	}

	.log-v .sb-btn {
		height: 15px;
		background: #e0e0e0;
	}

	.vthumb {
		flex: none;
		height: 18px;
		background: #999;
		box-shadow: inset 0 0 0 1px #888;
		border-radius: 8px;
	}

	.log-v.mini .sb-btn {
		height: 7px;
		overflow: hidden;
	}

	.mousebar {
		flex: none;
		display: flex;
		align-items: center;
		height: 22px;
		padding: 0 11px 0 6px;
		background: linear-gradient(#ececec, #b6b6b6);
		border-bottom: 1px solid #888;
		letter-spacing: 0.25px;
		white-space: nowrap;
	}

	.minigrip {
		flex: none;
		width: 5px;
		height: 9px;
		margin-right: 3px;
		background: repeating-linear-gradient(90deg, #888 0 1px, transparent 1px 2px);
	}

	.m1 {
		width: 305px;
	}

	.m2 {
		flex: 1;
	}

	.prompt {
		flex: 1;
		display: flex;
		align-items: center;
		position: relative;
	}

	.num {
		width: 14px;
		padding-left: 2px;
		height: 100%;
		line-height: 21px;
		border-right: 1px solid #444;
	}

	.gt {
		margin-left: 10px;
		font: 11.700px 'Liberation Mono', monospace;
	}

	.stub {
		position: absolute;
		right: 1px;
		top: 3px;
		bottom: 1px;
		width: 7px;
		background: #999;
		border: 1px solid #777;
		box-sizing: border-box;
	}
</style>
